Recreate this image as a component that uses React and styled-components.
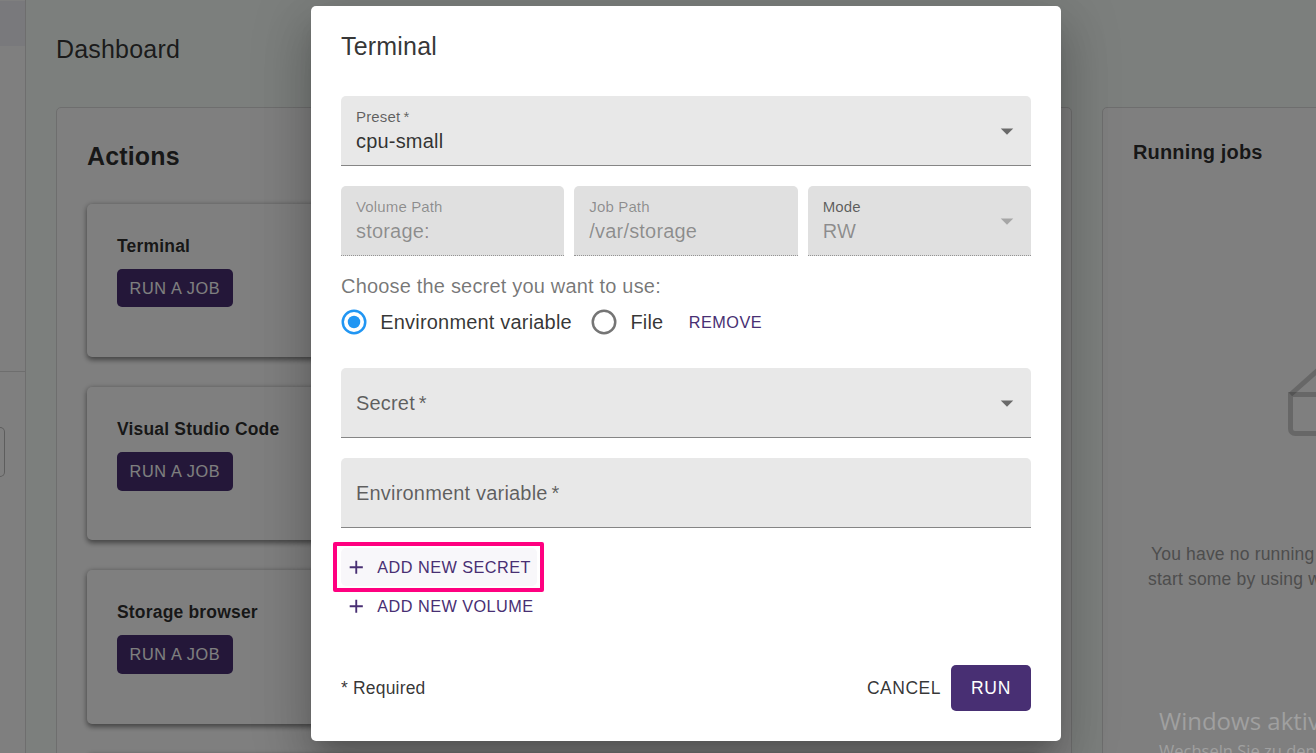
import React from 'react';
import styled, { createGlobalStyle } from 'styled-components';

const GlobalStyle = createGlobalStyle`
  *, *::before, *::after { box-sizing: border-box; }
  html, body, #root { height: 100%; }
  body {
    margin: 0;
    overflow: hidden;
    font-family: 'Liberation Sans', Arial, sans-serif;
    color: rgba(0, 0, 0, 0.8);
  }
`;

const Page = styled.div`
  position: relative;
  display: flex;
  width: 1316px;
  height: 753px;
  overflow: hidden;
  background: #f8fefa;
`;

const Sidebar = styled.aside`
  flex: 0 0 26px;
  display: flex;
  flex-direction: column;
  background: #fff;
  border-right: 1px solid #dcdcdc;
`;

const ActiveItem = styled.div`
  height: 45px;
  margin-top: 1px;
  background: #f2f3f8;
`;

const SidebarDivider = styled.div`
  height: 1px;
  margin-top: 325px;
  background: #dcdcdc;
`;

const SidebarBox = styled.div`
  width: 5px;
  height: 50px;
  margin-top: 55px;
  border: 1px solid #bbb;
  border-left: 0;
  border-radius: 0 5px 5px 0;
`;

const Main = styled.main`
  flex: 1;
  min-width: 0;
  padding: 32px 0 0 30px;
`;

const PageTitle = styled.h1`
  margin: 0;
  height: 75px;
  font-size: 25px;
  font-weight: 400;
  line-height: 35px;
  letter-spacing: 0.19px;
`;

const Columns = styled.div`
  display: flex;
  gap: 30px;
`;

const Panel = styled.section`
  flex: 0 0 ${(p) => p.$width}px;
  height: 760px;
  padding: 30px;
  background: #fff;
  border: 1px solid #dcdcdc;
  border-radius: 5px;
`;

const PanelTitle = styled.h2`
  margin: 0;
  color: rgba(0, 0, 0, 0.83);
  font-size: ${(p) => p.$size}px;
  font-weight: 700;
  line-height: ${(p) => p.$line}px;
  letter-spacing: 0.15px;
`;

const ActionList = styled.div`
  display: flex;
  flex-direction: column;
  gap: 30px;
  margin-top: 30px;
`;

const ActionCard = styled.article`
  flex: 0 0 153.2px;
  padding: 30px;
  background: #fff;
  border-radius: 5px;
  box-shadow: 0 2.5px 5px 0 rgba(0, 0, 0, 0.3), 0 1.25px 6.25px 0 rgba(0, 0, 0, 0.26);
`;

const ActionName = styled.h3`
  margin: 0 0 10px;
  color: rgba(0, 0, 0, 0.83);
  font-size: 17.5px;
  font-weight: 700;
  line-height: 25px;
  letter-spacing: 0.18px;
`;

const Button = styled.button`
  display: inline-flex;
  align-items: center;
  border: 0;
  border-radius: 5px;
  font-family: inherit;
  font-weight: 400;
  text-transform: uppercase;
  white-space: nowrap;
  line-height: 1.75;
  letter-spacing: 0.02857em;
`;

const RunJobButton = styled(Button)`
  padding: 5px 12.5px;
  font-size: 16.25px;
  letter-spacing: 0.66px;
  color: #fff;
  background: #482f73;
`;

const TextButton = styled(Button)`
  padding: 5px 6.25px;
  font-size: 16.25px;
  color: #482f73;
  background: ${(p) => (p.$hover ? '#f8f7fa' : 'transparent')};
`;

const CancelButton = styled(Button)`
  padding: 7.5px 10px;
  font-size: 17.5px;
  color: rgba(0, 0, 0, 0.8);
  background: transparent;
`;

const RunButton = styled(Button)`
  padding: 7.5px 20px;
  font-size: 17.5px;
  letter-spacing: 0.7px;
  color: #fff;
  background: #482f73;
`;

const Empty = styled.div`
  width: 360px;
  margin: 197px 0 0 15px;
`;

const Envelope = styled.svg`
  display: block;
  margin: 0 0 106px 138px;
`;

const EmptyLine = styled.p`
  margin: 0;
  padding-left: ${(p) => p.$indent || 0}px;
  color: #9b9b9b;
  font-size: 17.5px;
  line-height: 25px;
  letter-spacing: 0.18px;
  white-space: nowrap;
`;

const Backdrop = styled.div`
  position: absolute;
  inset: 0;
  background: rgba(0, 0, 0, 0.5);
`;

const Dialog = styled.div`
  position: absolute;
  top: 6px;
  left: 311px;
  display: flex;
  flex-direction: column;
  width: 750px;
  height: 735px;
  padding: 20px 30px 30px;
  background: #fff;
  border-radius: 5px;
  box-shadow: 0 13.75px 18.75px -8.75px rgba(0, 0, 0, 0.2),
    0 30px 47.5px 3.75px rgba(0, 0, 0, 0.14), 0 11.25px 57.5px 10px rgba(0, 0, 0, 0.12);
`;

const DialogTitle = styled.h2`
  margin: 0 0 30px;
  font-size: 25px;
  font-weight: 400;
  line-height: 40px;
  letter-spacing: 0.19px;
`;

const Field = styled.div`
  flex: ${(p) => (p.$grow ? '1 1 0' : '0 0 70px')};
  display: flex;
  align-items: center;
  justify-content: space-between;
  height: 70px;
  padding: 0 9px 0 15px;
  background: ${(p) => (p.$disabled ? '#e0e0e0' : '#e8e8e8')};
  border-bottom: 1px ${(p) => (p.$disabled ? 'dotted #949494' : 'solid #858585')};
  border-radius: 5px 5px 0 0;
`;

const FieldText = styled.div`
  display: flex;
  flex-direction: column;
`;

const FieldLabel = styled.span`
  color: ${(p) => (p.$faded ? 'rgba(0, 0, 0, 0.38)' : 'rgba(0, 0, 0, 0.6)')};
  font-size: ${(p) => (p.$large ? 20 : 15)}px;
  line-height: ${(p) => (p.$large ? 24 : 20)}px;
  letter-spacing: 0.00938em;
`;

const Asterisk = styled.span`
  margin-left: ${(p) => (p.$large ? -2 : -1)}px;
`;

const FieldValue = styled.span`
  margin-bottom: -2px;
  color: ${(p) => (p.$faded ? 'rgba(0, 0, 0, 0.38)' : 'rgba(0, 0, 0, 0.8)')};
  font-size: 20px;
  line-height: 29px;
  letter-spacing: 0.00938em;
`;

const PathRow = styled.div`
  display: flex;
  gap: 10px;
  margin: 20px 0 18px;
`;

const Prompt = styled.p`
  margin: 0;
  color: rgba(0, 0, 0, 0.54);
  font-size: 20px;
  line-height: 24px;
  letter-spacing: 0.00938em;
`;

const KindRow = styled.div`
  display: flex;
  align-items: center;
  height: 48px;
  margin-bottom: 22px;
`;

const Choice = styled.label`
  display: flex;
  align-items: center;
  gap: 11.5px;
  margin: 0 19.25px 0 -2.25px;
  font-size: 20px;
  line-height: 30px;
  letter-spacing: 0.00938em;
`;

const SecretFields = styled.div`
  display: flex;
  flex-direction: column;
  gap: 20px;
`;

const AddActions = styled.div`
  display: flex;
  flex-direction: column;
  align-items: flex-start;
  gap: 0.5px;
  margin-top: 20px;
`;

const PlusIcon = styled.svg`
  width: 22.5px;
  height: 22.5px;
  margin: 0 10px 0 -2.5px;
  fill: currentColor;
`;

const Footer = styled.footer`
  display: flex;
  align-items: center;
  margin-top: auto;
`;

const Required = styled.span`
  margin-right: auto;
  font-size: 17.5px;
  letter-spacing: 0.18px;
`;

const Highlight = styled.div`
  position: absolute;
  top: 542px;
  left: 333px;
  width: 210.5px;
  height: 50px;
  border: 4px solid #ff0080;
  border-radius: 2px;
`;

const Watermark = styled.div`
  position: absolute;
  top: 704px;
  left: 1159px;
  color: #a0a0a0;
  font-family: 'Open Sans', 'Noto Sans', sans-serif;
  white-space: nowrap;
`;

const WatermarkTitle = styled.div`
  font-size: 24px;
  line-height: 34px;
`;

const WatermarkText = styled.div`
  font-size: 16.5px;
  line-height: 26px;
`;

const Arrow = ({ faded }) => (
  <svg width="30" height="30" viewBox="0 0 24 24" fill={faded ? 'rgba(0,0,0,.26)' : 'rgba(0,0,0,.54)'}>
    <path d="M7 10l5 5 5-5z" />
  </svg>
);

const Radio = ({ checked }) => (
  <svg width="30" height="30" viewBox="0 0 24 24" fill="none">
    <circle cx="12" cy="12" r="9" strokeWidth="2" stroke={checked ? '#2196f3' : '#757575'} />
    {checked && <circle cx="12" cy="12" r="5" fill="#2196f3" />}
  </svg>
);

const Plus = () => (
  <PlusIcon viewBox="0 0 24 24">
    <path d="M19 13h-6v6h-2v-6H5v-2h6V5h2v6h6v2z" />
  </PlusIcon>
);

const paths = [
  { label: 'Volume Path', value: 'storage:' },
  { label: 'Job Path', value: '/var/storage' },
  { label: 'Mode', value: 'RW', select: true },
];

export default function App() {
  return (
    <>
      <GlobalStyle />
      <Page>
        <Sidebar>
          <ActiveItem />
          <SidebarDivider />
          <SidebarBox />
        </Sidebar>
        <Main>
          <PageTitle>Dashboard</PageTitle>
          <Columns>
            <Panel $width={1016}>
              <PanelTitle $size={25} $line={36}>Actions</PanelTitle>
              <ActionList>
                {['Terminal', 'Visual Studio Code', 'Storage browser', ''].map((name) => (
                  <ActionCard key={name}>
                    {name && (
                      <>
                        <ActionName>{name}</ActionName>
                        <RunJobButton>Run a job</RunJobButton>
                      </>
                    )}
                  </ActionCard>
                ))}
              </ActionList>
            </Panel>
            <Panel $width={420}>
              <PanelTitle $size={20} $line={28}>Running jobs</PanelTitle>
              <Empty>
                <Envelope width="78" height="73" viewBox="0 0 78 73" fill="none" stroke="#000" strokeOpacity="0.19" strokeWidth="5">
                  <path d="M4.500 31.500H76V66a4.500 4.500 0 0 1-4.500 4.500H9a4.500 4.500 0 0 1-4.500-4.500V29" />
                  <path d="M4.500 31.500L32 7H48.500L76 31.500" />
                </Envelope>
                <EmptyLine $indent={3}>You have no running</EmptyLine>
                <EmptyLine>start some by using w</EmptyLine>
              </Empty>
            </Panel>
          </Columns>
        </Main>
        <Backdrop />
        <Watermark>
          <WatermarkTitle>Windows aktiv</WatermarkTitle>
          <WatermarkText>Wechseln Sie zu den</WatermarkText>
        </Watermark>
        <Dialog role="dialog">
          <DialogTitle>Terminal</DialogTitle>
          <Field>
            <FieldText>
              <FieldLabel>Preset <Asterisk>*</Asterisk></FieldLabel>
              <FieldValue>cpu-small</FieldValue>
            </FieldText>
            <Arrow />
          </Field>
          <PathRow>
            {paths.map((p) => (
              <Field key={p.label} $grow $disabled>
                <FieldText>
                  <FieldLabel $faded={!p.select}>{p.label}</FieldLabel>
                  <FieldValue $faded>{p.value}</FieldValue>
                </FieldText>
                {p.select && <Arrow faded />}
              </Field>
            ))}
          </PathRow>
          <Prompt>Choose the secret you want to use:</Prompt>
          <KindRow>
            <Choice><Radio checked />Environment variable</Choice>
            <Choice><Radio />File</Choice>
            <TextButton>Remove</TextButton>
          </KindRow>
          <SecretFields>
            <Field>
              <FieldLabel $large>Secret <Asterisk $large>*</Asterisk></FieldLabel>
              <Arrow />
            </Field>
            <Field>
              <FieldLabel $large>Environment variable <Asterisk $large>*</Asterisk></FieldLabel>
            </Field>
          </SecretFields>
          <AddActions>
            <TextButton $hover><Plus />Add new secret</TextButton>
            <TextButton><Plus />Add new volume</TextButton>
          </AddActions>
          <Footer>
            <Required>* Required</Required>
            <CancelButton>Cancel</CancelButton>
            <RunButton>Run</RunButton>
          </Footer>
        </Dialog>
        <Highlight />
      </Page>
    </>
  );
}
